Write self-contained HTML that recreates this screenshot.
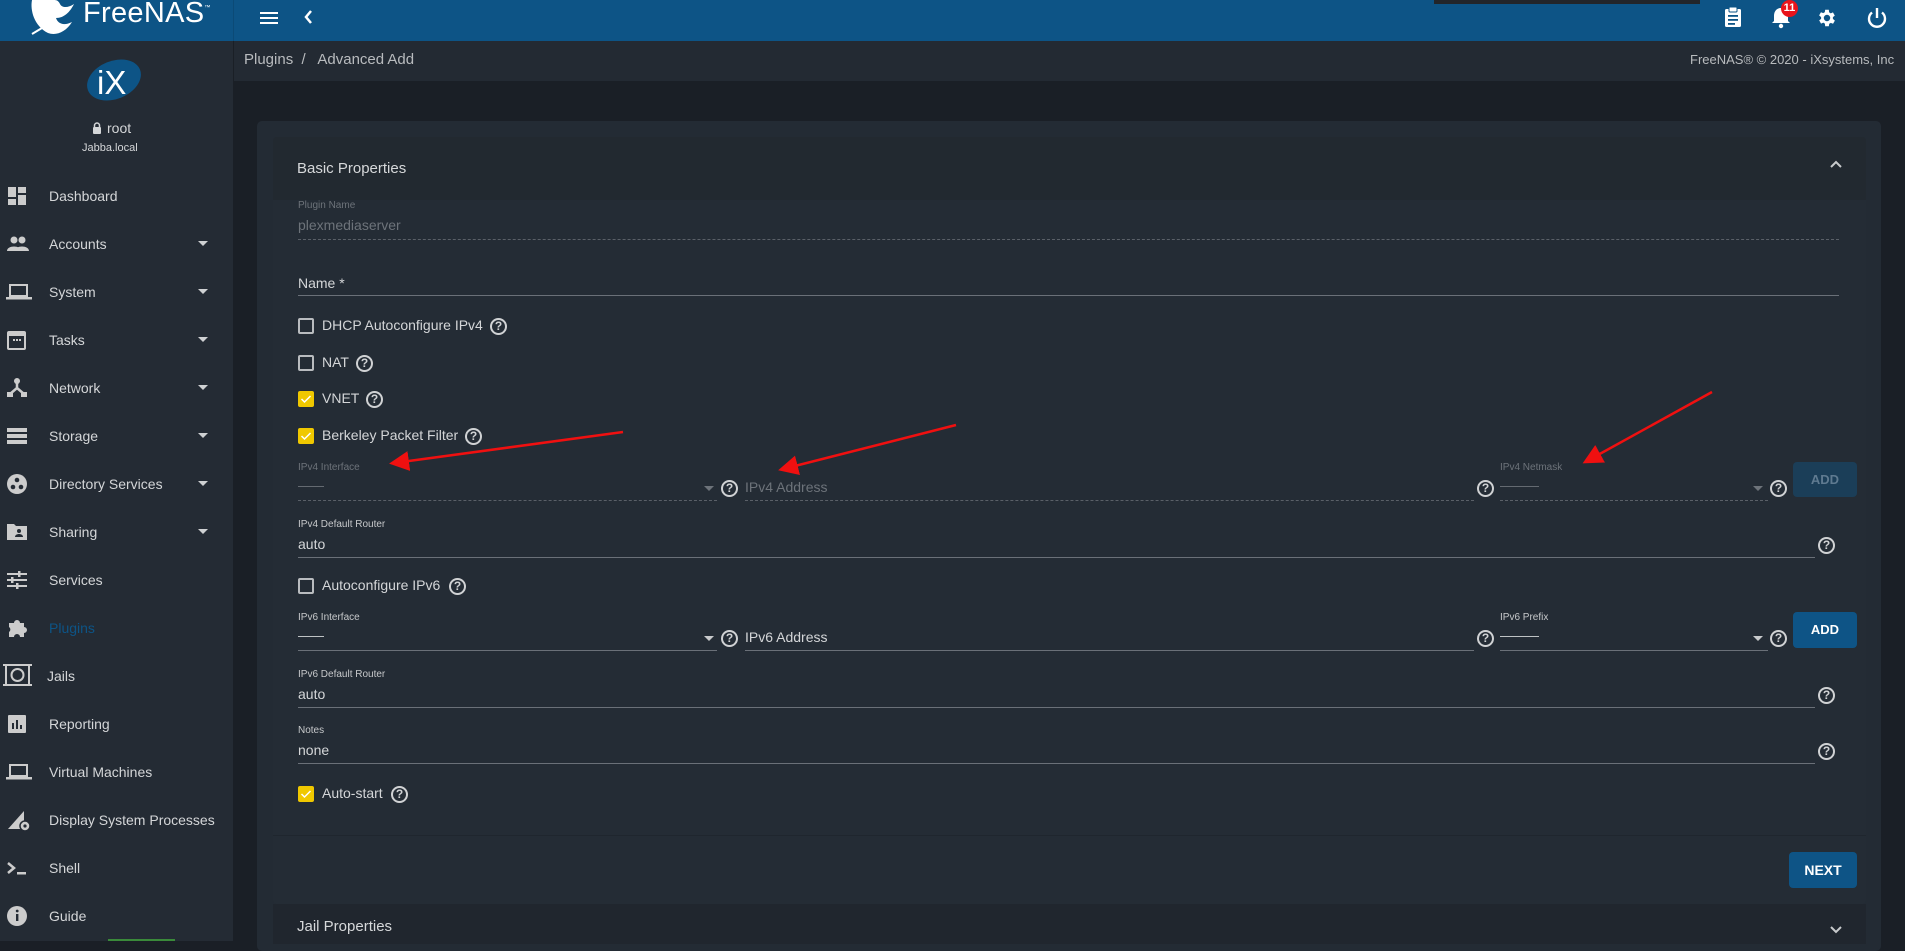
<!DOCTYPE html>
<html><head><meta charset="utf-8"><style>
*{box-sizing:border-box;margin:0;padding:0}
body{width:1905px;height:941px;overflow:hidden;background:#1a1f26;font-family:"Liberation Sans",Arial,sans-serif;color:#d6d8da;position:relative}
.a{position:absolute}
.hdr{left:0;top:0;width:1905px;height:41px;background:#0d5486}
.side{left:0;top:41px;width:233px;height:900px;background:#242b34}
.nav{position:absolute;left:0;width:233px;height:48px;font-size:14px;color:#d4d6d8}
.nav .t{position:absolute;left:49px;top:50%;transform:translateY(-50%)}
.nav svg{position:absolute;left:6px;top:13px}
.nav .c{position:absolute;left:198px;top:21px;border-left:5px solid transparent;border-right:5px solid transparent;border-top:5px solid #cfd1d3}
.lbl{font-size:10px;color:#c7c9cb}
.dim{color:#6d737a}
.line{height:1px;background:#6a7078}
.dash{height:0;border-top:1px dashed #5a6068}
.cb{width:16px;height:16px;border:2px solid #b9bcbf;border-radius:2px}
.cbo{width:16px;height:16px;background:#f0c800;border-radius:2px}
.ct{font-size:14px;color:#d4d6d8}
.btn{background:#0e5486;color:#fff;font-weight:bold;font-size:13px;border-radius:4px;text-align:center}
.q{width:17px;height:17px;border:2px solid #d0d2d4;border-radius:50%;font-size:12px;font-weight:bold;text-align:center;line-height:13px;color:#d0d2d4}
.arr{width:0;height:0;border-left:5px solid transparent;border-right:5px solid transparent;border-top:5px solid #8a8e93}
</style></head><body>
<div class="a hdr"></div>
<div class="a" style="left:1434px;top:0;width:266px;height:4px;background:#22252a"></div>
<div class="a" style="left:233px;top:0;width:1px;height:41px;background:#0b4a76"></div>
<svg class="a" style="left:28px;top:0" width="52" height="36" viewBox="0 0 52 36"><path d="M4 0 C2 10 6 26 20 33 C28 36 38 32 44 22 C36 26 30 24 28 18 C36 18 42 12 46 4 C40 8 34 8 32 4 C30 0 28 0 26 0 Z" fill="#fff"/><path d="M4 34 L14 28" stroke="#fff" stroke-width="2"/></svg>
<div class="a" style="left:83px;top:-3px;font-size:29px;color:#fff;letter-spacing:0.3px">FreeNAS<span style="font-size:6px;vertical-align:top;position:relative;top:8px">™</span></div>
<svg class="a" style="left:259px;top:10px" width="20" height="16"><rect x="1" y="2" width="18" height="2" fill="#fff"/><rect x="1" y="7" width="18" height="2" fill="#fff"/><rect x="1" y="12" width="18" height="2" fill="#fff"/></svg>
<svg class="a" style="left:302px;top:8px" width="12" height="18"><path d="M9 3 L4 9 L9 15" stroke="#fff" stroke-width="2.5" fill="none"/></svg>
<svg class="a" style="left:1723px;top:6px" width="20" height="22" viewBox="0 0 20 22"><rect x="2" y="3" width="16" height="18" rx="1.5" fill="#fff"/><rect x="6" y="1" width="8" height="5" rx="1" fill="#fff" stroke="#0d5486" stroke-width="1"/><rect x="5" y="9" width="10" height="1.8" fill="#0d5486"/><rect x="5" y="13" width="10" height="1.8" fill="#0d5486"/><rect x="5" y="17" width="7" height="1.8" fill="#0d5486"/></svg>
<svg class="a" style="left:1770px;top:5px" width="22" height="24" viewBox="0 0 22 24"><path d="M11 3 C6 3 4 7 4 11 L4 16 L2 18 L20 18 L18 16 L18 11 C18 7 16 3 11 3Z" fill="#fff"/><circle cx="11" cy="21" r="2.2" fill="#fff"/></svg>
<div class="a" style="left:1781px;top:0;width:17px;height:17px;border-radius:50%;background:#e8141c;color:#fff;font-size:11px;font-weight:bold;text-align:center;line-height:16px">11</div>
<svg class="a" style="left:1816px;top:7px" width="22" height="22" viewBox="0 0 24 24"><path fill="#fff" d="M19.4 13a7.5 7.5 0 0 0 0-2l2.1-1.6-2-3.5-2.5 1a7 7 0 0 0-1.7-1L15 3h-4l-.4 2.7a7 7 0 0 0-1.7 1l-2.5-1-2 3.5L6.6 11a7.5 7.5 0 0 0 0 2l-2.1 1.6 2 3.5 2.5-1a7 7 0 0 0 1.7 1L11 21h4l.4-2.7a7 7 0 0 0 1.700-1l2.5 1 2-3.5zM13 15.5a3.5 3.5 0 1 1 0-7 3.5 3.5 0 0 1 0 7z" transform="translate(-1 0)"/></svg>
<svg class="a" style="left:1865px;top:6px" width="24" height="24" viewBox="0 0 24 24"><path d="M7 6.5 A8 8 0 1 0 17 6.5" stroke="#fff" stroke-width="2.4" fill="none"/><rect x="10.8" y="2" width="2.4" height="10" fill="#fff"/></svg>

<div class="a side"></div>
<svg class="a" style="left:83px;top:58px" width="62" height="44"><ellipse cx="31" cy="22" rx="28" ry="19" transform="rotate(-22 31 22)" fill="#0d5486"/><text x="14" y="36" font-family="Liberation Sans" font-size="33" fill="#fff">iX</text></svg>
<svg class="a" style="left:92px;top:122px" width="10" height="12"><rect x="1" y="5" width="8" height="7" rx="1" fill="#d4d6d8"/><path d="M2.5 5 V3.5 a2.5 2.5 0 0 1 5 0 V5" stroke="#d4d6d8" stroke-width="1.5" fill="none"/></svg>
<div class="a" style="left:107px;top:120px;font-size:14px;color:#d4d6d8">root</div>
<div class="a" style="left:82px;top:142px;font-size:11px;color:#d4d6d8">Jabba.local</div>

<div class="nav" style="top:172px"><svg width="22" height="22"><rect x="2" y="2" width="8" height="10" fill="#ccc"/><rect x="12" y="2" width="8" height="6" fill="#ccc"/><rect x="2" y="14" width="8" height="6" fill="#ccc"/><rect x="12" y="10" width="8" height="10" fill="#ccc"/></svg><span class="t">Dashboard</span></div>
<div class="nav" style="top:220px"><svg width="24" height="22"><circle cx="8" cy="7" r="3.5" fill="#ccc"/><circle cx="16" cy="7" r="3.5" fill="#ccc"/><path d="M1 18 C1 12 15 12 15 18Z M9 18 C9 12 23 12 23 18Z" fill="#ccc"/></svg><span class="t">Accounts</span><i class="c"></i></div>
<div class="nav" style="top:268px"><svg width="26" height="22"><rect x="4" y="4" width="17" height="11" fill="none" stroke="#ccc" stroke-width="2"/><rect x="0" y="16" width="26" height="2.5" fill="#ccc"/></svg><span class="t">System</span><i class="c"></i></div>
<div class="nav" style="top:316px"><svg width="22" height="22"><rect x="2" y="3" width="17" height="17" rx="1" fill="none" stroke="#ccc" stroke-width="2"/><rect x="2" y="3" width="17" height="4" fill="#ccc"/><rect x="7" y="10" width="2" height="2" fill="#ccc"/><rect x="10" y="10" width="2" height="2" fill="#ccc"/><rect x="13" y="10" width="2" height="2" fill="#ccc"/></svg><span class="t">Tasks</span><i class="c"></i></div>
<div class="nav" style="top:364px"><svg width="22" height="22"><circle cx="11" cy="4" r="3" fill="#ccc"/><path d="M11 6 V11 L4 17 M11 11 L18 17" stroke="#ccc" stroke-width="2.5" fill="none"/><rect x="1" y="15" width="6" height="5" fill="#ccc"/><rect x="15" y="15" width="6" height="5" fill="#ccc"/></svg><span class="t">Network</span><i class="c"></i></div>
<div class="nav" style="top:412px"><svg width="22" height="22"><rect x="1" y="3" width="20" height="4" fill="#ccc"/><rect x="1" y="9" width="20" height="4" fill="#ccc"/><rect x="1" y="15" width="20" height="4" fill="#ccc"/></svg><span class="t">Storage</span><i class="c"></i></div>
<div class="nav" style="top:460px"><svg width="22" height="22"><circle cx="11" cy="11" r="10" fill="#ccc"/><circle cx="11" cy="7" r="2.3" fill="#242b34"/><circle cx="7" cy="14" r="2.3" fill="#242b34"/><circle cx="15" cy="14" r="2.3" fill="#242b34"/></svg><span class="t">Directory Services</span><i class="c"></i></div>
<div class="nav" style="top:508px"><svg width="22" height="22"><path d="M1 3 H8 L10 5 H21 V19 H1Z" fill="#ccc"/><circle cx="13" cy="10" r="2" fill="#242b34"/><path d="M9 16 C9 12 17 12 17 16Z" fill="#242b34"/></svg><span class="t">Sharing</span><i class="c"></i></div>
<div class="nav" style="top:556px"><svg width="22" height="22"><path d="M1 5 H21 M1 11 H21 M1 17 H21" stroke="#ccc" stroke-width="2"/><rect x="12" y="2" width="2.5" height="6" fill="#ccc"/><rect x="5" y="8" width="2.5" height="6" fill="#ccc"/><rect x="10" y="14" width="2.5" height="6" fill="#ccc"/></svg><span class="t">Services</span></div>
<div class="nav" style="top:604px"><svg width="22" height="22"><path d="M3 6 H8 A3 3 0 0 1 14 6 H18 V10 A3 3 0 0 1 18 16 V20 H14 A3 3 0 0 0 8 20 H3 V15 A3 3 0 0 0 3 10Z" fill="#ccc"/></svg><span class="t" style="color:#0d5486">Plugins</span></div>
<div class="nav" style="top:652px"><svg width="30" height="24" style="left:3px;top:12px"><rect x="0" y="0" width="29" height="2" fill="#ccc"/><rect x="0" y="20" width="29" height="2" fill="#ccc"/><rect x="2" y="2" width="2" height="18" fill="#ccc"/><rect x="25" y="2" width="2" height="18" fill="#ccc"/><circle cx="14.5" cy="11" r="6" fill="none" stroke="#ccc" stroke-width="2"/></svg><span class="t" style="left:47px">Jails</span></div>
<div class="nav" style="top:700px"><svg width="22" height="22"><rect x="2" y="2" width="18" height="18" rx="1" fill="#ccc"/><rect x="6" y="10" width="2" height="6" fill="#242b34"/><rect x="10" y="7" width="2" height="9" fill="#242b34"/><rect x="14" y="12" width="2" height="4" fill="#242b34"/></svg><span class="t">Reporting</span></div>
<div class="nav" style="top:748px"><svg width="26" height="22"><rect x="4" y="4" width="17" height="11" fill="none" stroke="#ccc" stroke-width="2"/><rect x="0" y="16" width="26" height="2.5" fill="#ccc"/></svg><span class="t">Virtual Machines</span></div>
<div class="nav" style="top:796px"><svg width="26" height="24"><path d="M2 20 L18 2 V20Z" fill="#ccc"/><circle cx="19" cy="17" r="5" fill="#ccc" stroke="#242b34" stroke-width="1.5"/><circle cx="19" cy="17" r="1.6" fill="#242b34"/></svg><span class="t">Display System Processes</span></div>
<div class="nav" style="top:844px"><svg width="24" height="22"><path d="M2 6 L8 11 L2 16" stroke="#ccc" stroke-width="2.5" fill="none"/><rect x="11" y="15" width="9" height="2.5" fill="#ccc"/></svg><span class="t">Shell</span></div>
<div class="nav" style="top:892px"><svg width="22" height="22"><circle cx="11" cy="11" r="10" fill="#ccc"/><rect x="10" y="9" width="2.4" height="7" fill="#242b34"/><circle cx="11.2" cy="6" r="1.4" fill="#242b34"/></svg><span class="t">Guide</span></div>
<div class="a" style="left:108px;top:939px;width:67px;height:2px;background:#3a8a3a"></div>

<div class="a" style="left:234px;top:41px;width:1671px;height:40px;background:#232a33"></div>
<div class="a" style="left:244px;top:51px;font-size:15px;color:#b8bbbe">Plugins &nbsp;/ &nbsp; Advanced Add</div>
<div class="a" style="left:1690px;top:52px;font-size:13px;color:#b8bbbe">FreeNAS® © 2020 - iXsystems, Inc</div>

<div class="a" style="left:257px;top:121px;width:1624px;height:830px;background:#232b34;border-radius:5px"></div>
<div class="a" style="left:273px;top:137px;width:1593px;height:767px;background:#242c35;border-radius:4px"></div>
<div class="a" style="left:273px;top:137px;width:1593px;height:63px;background:#222930;border-radius:4px 4px 0 0"></div>
<div class="a" style="left:297px;top:160px;font-size:15px;color:#d6d8da">Basic Properties</div>
<svg class="a" style="left:1829px;top:159px" width="14" height="10"><path d="M2 8 L7 3 L12 8" stroke="#c8cacc" stroke-width="2" fill="none"/></svg>

<div class="a lbl dim" style="left:298px;top:200px">Plugin Name</div>
<div class="a dim" style="left:298px;top:217px;font-size:14px">plexmediaserver</div>
<div class="a dash" style="left:298px;top:239px;width:1541px"></div>

<div class="a ct" style="left:298px;top:275px">Name *</div>
<div class="a line" style="left:298px;top:295px;width:1541px"></div>

<div class="a cb" style="left:298px;top:318px"></div><div class="a ct" style="left:322px;top:317px">DHCP Autoconfigure IPv4</div><div class="a q" style="left:490px;top:318px">?</div>
<div class="a cb" style="left:298px;top:355px"></div><div class="a ct" style="left:322px;top:354px">NAT</div><div class="a q" style="left:356px;top:355px">?</div>
<div class="a cbo" style="left:298px;top:391px"><svg width="16" height="16"><path d="M3.5 8 L6.5 11 L12.5 5" stroke="#fff" stroke-width="1.5" fill="none"/></svg></div><div class="a ct" style="left:322px;top:390px">VNET</div><div class="a q" style="left:366px;top:391px">?</div>
<div class="a cbo" style="left:298px;top:428px"><svg width="16" height="16"><path d="M3.5 8 L6.5 11 L12.5 5" stroke="#fff" stroke-width="1.5" fill="none"/></svg></div><div class="a ct" style="left:322px;top:427px">Berkeley Packet Filter</div><div class="a q" style="left:465px;top:428px">?</div>

<div class="a lbl dim" style="left:298px;top:462px">IPv4 Interface</div>
<div class="a dim" style="left:298px;top:478px;font-size:13px">——</div>
<div class="a arr" style="left:704px;top:486px;border-top-color:#6d737a"></div>
<div class="a dash" style="left:298px;top:500px;width:419px"></div>
<div class="a q" style="left:721px;top:480px">?</div>
<div class="a dim" style="left:745px;top:479px;font-size:14px">IPv4 Address</div>
<div class="a dash" style="left:745px;top:500px;width:729px"></div>
<div class="a q" style="left:1477px;top:480px">?</div>
<div class="a lbl dim" style="left:1500px;top:462px">IPv4 Netmask</div>
<div class="a dim" style="left:1500px;top:478px;font-size:13px">———</div>
<div class="a arr" style="left:1753px;top:486px;border-top-color:#6d737a"></div>
<div class="a dash" style="left:1500px;top:500px;width:268px"></div>
<div class="a q" style="left:1770px;top:480px">?</div>
<div class="a btn" style="left:1793px;top:462px;width:64px;height:35px;line-height:35px;background:#1b3e58;color:#5f7a90">ADD</div>

<div class="a lbl" style="left:298px;top:519px">IPv4 Default Router</div>
<div class="a ct" style="left:298px;top:536px">auto</div>
<div class="a line" style="left:298px;top:557px;width:1517px"></div>
<div class="a q" style="left:1818px;top:537px">?</div>

<div class="a cb" style="left:298px;top:578px"></div><div class="a ct" style="left:322px;top:577px">Autoconfigure IPv6</div><div class="a q" style="left:449px;top:578px">?</div>

<div class="a lbl" style="left:298px;top:612px">IPv6 Interface</div>
<div class="a ct" style="left:298px;top:628px;font-size:13px">——</div>
<div class="a arr" style="left:704px;top:636px;border-top-color:#c8cacc"></div>
<div class="a line" style="left:298px;top:650px;width:419px"></div>
<div class="a q" style="left:721px;top:630px">?</div>
<div class="a ct" style="left:745px;top:629px">IPv6 Address</div>
<div class="a line" style="left:745px;top:650px;width:729px"></div>
<div class="a q" style="left:1477px;top:630px">?</div>
<div class="a lbl" style="left:1500px;top:612px">IPv6 Prefix</div>
<div class="a ct" style="left:1500px;top:628px;font-size:13px">———</div>
<div class="a arr" style="left:1753px;top:636px;border-top-color:#c8cacc"></div>
<div class="a line" style="left:1500px;top:650px;width:268px"></div>
<div class="a q" style="left:1770px;top:630px">?</div>
<div class="a btn" style="left:1793px;top:612px;width:64px;height:36px;line-height:36px">ADD</div>

<div class="a lbl" style="left:298px;top:669px">IPv6 Default Router</div>
<div class="a ct" style="left:298px;top:686px">auto</div>
<div class="a line" style="left:298px;top:707px;width:1517px"></div>
<div class="a q" style="left:1818px;top:687px">?</div>

<div class="a lbl" style="left:298px;top:725px">Notes</div>
<div class="a ct" style="left:298px;top:742px">none</div>
<div class="a line" style="left:298px;top:763px;width:1517px"></div>
<div class="a q" style="left:1818px;top:743px">?</div>

<div class="a cbo" style="left:298px;top:786px"><svg width="16" height="16"><path d="M3.5 8 L6.5 11 L12.5 5" stroke="#fff" stroke-width="1.5" fill="none"/></svg></div><div class="a ct" style="left:322px;top:785px">Auto-start</div><div class="a q" style="left:391px;top:786px">?</div>

<div class="a" style="left:273px;top:835px;width:1593px;height:1px;background:#1f262e"></div>
<div class="a btn" style="left:1789px;top:852px;width:68px;height:36px;line-height:36px;font-size:14px">NEXT</div>

<div class="a" style="left:273px;top:904px;width:1593px;height:40px;background:#20262e"></div>
<div class="a" style="left:297px;top:918px;font-size:15px;color:#d6d8da">Jail Properties</div>
<svg class="a" style="left:1829px;top:925px" width="14" height="10"><path d="M2 2 L7 7 L12 2" stroke="#c8cacc" stroke-width="2" fill="none"/></svg>

<svg class="a" style="left:0;top:0" width="1905" height="941">
<defs><marker id="m" markerWidth="8" markerHeight="8" refX="6" refY="4" orient="auto"><path d="M0 0 L8 4 L0 8 Z" fill="#f01010"/></marker></defs>
<line x1="623" y1="432" x2="394" y2="463" stroke="#f01010" stroke-width="2.5" marker-end="url(#m)"/>
<line x1="956" y1="425" x2="783" y2="469" stroke="#f01010" stroke-width="2.5" marker-end="url(#m)"/>
<line x1="1712" y1="392" x2="1587" y2="461" stroke="#f01010" stroke-width="2.5" marker-end="url(#m)"/>
</svg>
</body></html>
